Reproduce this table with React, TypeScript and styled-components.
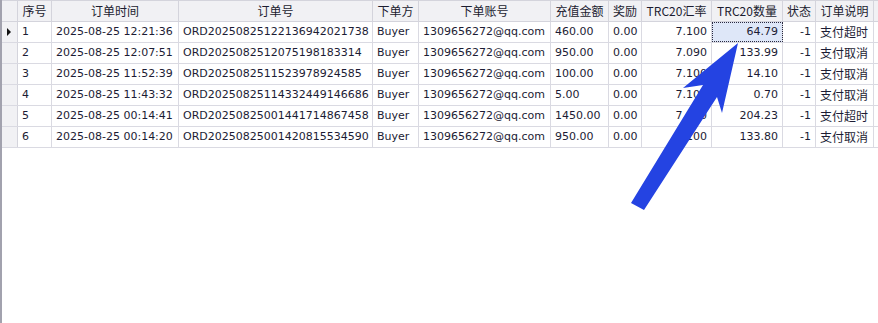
import React from 'react';
import styled, { createGlobalStyle } from 'styled-components';

const GlobalStyle = createGlobalStyle`
  html, body {
    margin: 0;
    padding: 0;
    background: #fff;
  }
`;

type Align = 'left' | 'center' | 'right';

type Column = {
  title: string;
  width: number;
  align: Align;
  cjk?: boolean;
};

const columns: Column[] = [
  { title: '序号', width: 34, align: 'left' },
  { title: '订单时间', width: 127, align: 'left' },
  { title: '订单号', width: 194, align: 'left' },
  { title: '下单方', width: 46, align: 'left' },
  { title: '下单账号', width: 132, align: 'left' },
  { title: '充值金额', width: 58, align: 'left' },
  { title: '奖励', width: 33, align: 'left' },
  { title: 'TRC20汇率', width: 70, align: 'right' },
  { title: 'TRC20数量', width: 71, align: 'right' },
  { title: '状态', width: 33, align: 'right' },
  { title: '订单说明', width: 58, align: 'left', cjk: true },
];

const rows: string[][] = [
  ['1', '2025-08-25 12:21:36', 'ORD20250825122136942021738', 'Buyer', '1309656272@qq.com', '460.00', '0.00', '7.100', '64.79', '-1', '支付超时'],
  ['2', '2025-08-25 12:07:51', 'ORD2025082512075198183314', 'Buyer', '1309656272@qq.com', '950.00', '0.00', '7.090', '133.99', '-1', '支付取消'],
  ['3', '2025-08-25 11:52:39', 'ORD2025082511523978924585', 'Buyer', '1309656272@qq.com', '100.00', '0.00', '7.100', '14.10', '-1', '支付取消'],
  ['4', '2025-08-25 11:43:32', 'ORD20250825114332449146686', 'Buyer', '1309656272@qq.com', '5.00', '0.00', '7.100', '0.70', '-1', '支付取消'],
  ['5', '2025-08-25 00:14:41', 'ORD20250825001441714867458', 'Buyer', '1309656272@qq.com', '1450.00', '0.00', '7.100', '204.23', '-1', '支付超时'],
  ['6', '2025-08-25 00:14:20', 'ORD20250825001420815534590', 'Buyer', '1309656272@qq.com', '950.00', '0.00', '7.100', '133.80', '-1', '支付取消'],
];

// row header + data columns + leftover space on the right
const gridTemplate = `16px ${columns.map((c) => `${c.width}px`).join(' ')} 1fr`;

const Frame = styled.div`
  position: relative;
  width: 878px;
  height: 323px;
  box-sizing: border-box;
  border-left: 2px solid #a2a2ae;
  background: #fff;
  overflow: hidden;
  color: #1c1c34;
`;

const HeaderRow = styled.div`
  display: grid;
  grid-template-columns: ${gridTemplate};
  height: 22px;
  box-sizing: border-box;
  border-top: 1px solid #d4d4dc;
  border-bottom: 1px solid #d4d4dc;
  background: #f1f1f4;
`;

const HeaderCell = styled.div`
  display: flex;
  align-items: center;
  justify-content: center;
  border-right: 1px solid #d4d4dc;
  font-family: "Noto Sans CJK SC", sans-serif;
  font-size: 12px;
  line-height: 14px;
  white-space: nowrap;
  overflow: hidden;
  color: #1c1c30;
`;

const Filler = styled.div``;

const DataRow = styled.div`
  display: grid;
  grid-template-columns: ${gridTemplate};
  height: 21px;
  box-sizing: border-box;
  border-bottom: 1px solid #dadae2;
`;

const RowHeader = styled.div`
  display: flex;
  align-items: center;
  justify-content: center;
  background: #f1f1f4;
  border-right: 1px solid #d4d4dc;
`;

const Pointer = styled.span`
  width: 0;
  height: 0;
  margin-left: -2px;
  border-top: 4px solid transparent;
  border-bottom: 4px solid transparent;
  border-left: 4px solid #111;
`;

const Cell = styled.div<{ $align: Align; $cjk?: boolean; $selected?: boolean }>`
  display: flex;
  align-items: center;
  justify-content: ${(p) => (p.$align === 'right' ? 'flex-end' : p.$align === 'center' ? 'center' : 'flex-start')};
  padding: 0 ${(p) => (p.$align === 'right' ? '4px' : '3px')} 0 4px;
  border-right: 1px solid #dadae2;
  font-family: ${(p) => (p.$cjk ? '"Noto Sans CJK SC", sans-serif' : '"DejaVu Sans", "Noto Sans CJK SC", sans-serif')};
  font-size: ${(p) => (p.$cjk ? '12px' : '11px')};
  line-height: 14px;
  white-space: nowrap;
  overflow: hidden;
  background: ${(p) => (p.$selected ? '#dee7f8' : 'transparent')};
  outline: ${(p) => (p.$selected ? '1px dotted #2a2a40' : 'none')};
  outline-offset: -1px;
`;

const ArrowLayer = styled.svg`
  position: absolute;
  left: -2px;
  top: 0;
  pointer-events: none;
`;

const App: React.FC = () => {
  return (
    <>
      <GlobalStyle />
      <Frame>
        <HeaderRow>
          <RowHeader />
          {columns.map((c) => (
            <HeaderCell key={c.title}>{c.title}</HeaderCell>
          ))}
          <Filler />
        </HeaderRow>
        {rows.map((r, ri) => (
          <DataRow key={r[0]}>
            <RowHeader>{ri === 0 && <Pointer />}</RowHeader>
            {r.map((v, ci) => (
              <Cell
                key={ci}
                $align={columns[ci].align}
                $cjk={columns[ci].cjk}
                $selected={ri === 0 && ci === 8}
              >
                {v}
              </Cell>
            ))}
            <Filler />
          </DataRow>
        ))}
        <ArrowLayer width="878" height="323" viewBox="0 0 878 323">
          <polygon
            points="738,43 683,88 703,85 631,203 644,210 717,97 722,113"
            fill="#2443e2"
          />
        </ArrowLayer>
      </Frame>
    </>
  );
};

export default App;
